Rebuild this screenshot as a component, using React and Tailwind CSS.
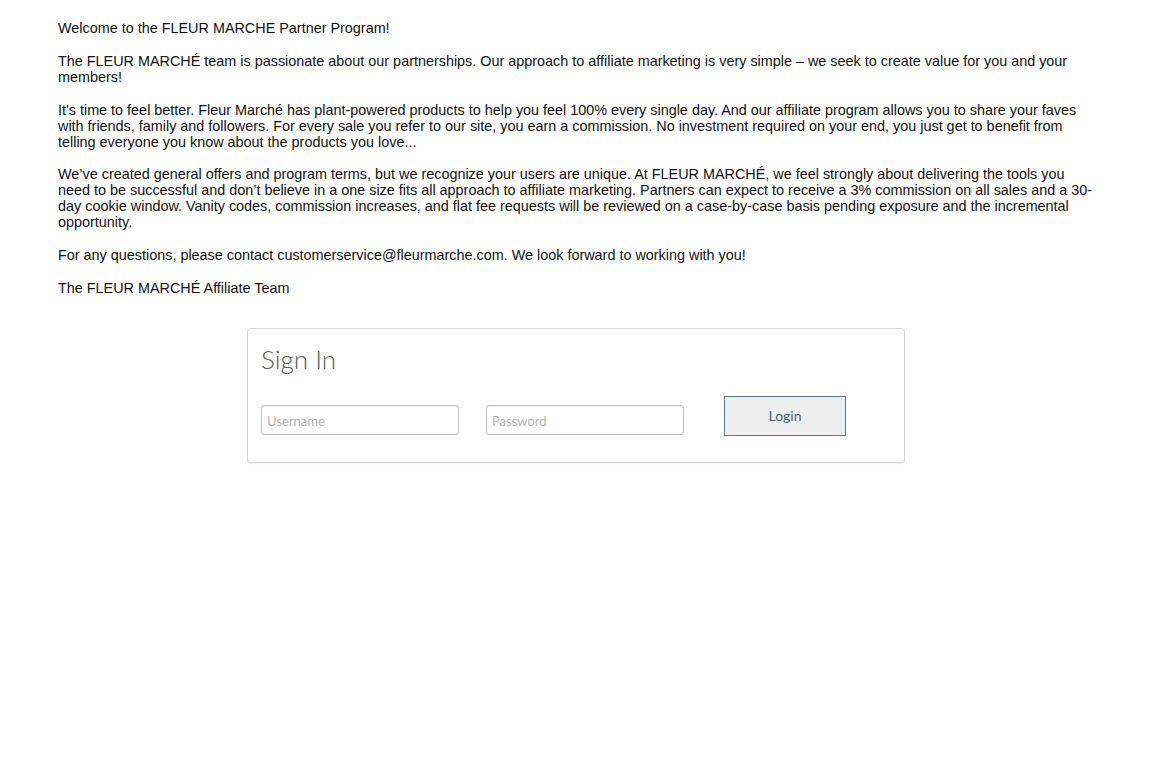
export default function App() {
  const body = { fontFamily: '"Liberation Sans", Arial, sans-serif' };
  const ui = { fontFamily: 'Lato, "Open Sans", sans-serif' };
  return (
    <div className="min-h-[768px] bg-white px-[58px] pt-[20px] text-[#111]" style={body}>
      <div className="text-[14.4px] leading-[16px]">
        <p className="mb-[16.8px]">Welcome to the FLEUR MARCHE Partner Program!</p>
        <p className="mb-[16.8px]">
          The FLEUR MARCHÉ team is passionate about our partnerships. Our approach to affiliate marketing is very simple – we seek to create value for you and your members!
        </p>
        <p className="mb-[16.8px]">
          It's time to feel better. Fleur Marché has plant-powered products to help you feel 100% every single day. And our affiliate program allows you to share your faves with friends, family and followers. For every sale you refer to our site, you earn a commission. No investment required on your end, you just get to benefit from telling everyone you know about the products you love...
        </p>
        <p className="mb-[16.8px]">
          We’ve created general offers and program terms, but we recognize your users are unique. At FLEUR MARCHÉ, we feel strongly about delivering the tools you need to be successful and don’t believe in a one size fits all approach to affiliate marketing. Partners can expect to receive a 3% commission on all sales and a 30-day cookie window. Vanity codes, commission increases, and flat fee requests will be reviewed on a case-by-case basis pending exposure and the incremental opportunity.
        </p>
        <p className="mb-[16.8px]">
          For any questions, please contact customerservice@fleurmarche.com. We look forward to working with you!
        </p>
        <p>The FLEUR MARCHÉ Affiliate Team</p>
      </div>

      <div className="mx-auto mt-[32px] h-[135px] w-[658px] rounded-[3px] border border-[#d6d6d6] pl-[13px] pt-[14px] shadow-[0_1px_2px_rgba(0,0,0,0.06)]" style={ui}>
        <h2 className="text-[26px] leading-[32px] font-light text-[#5a5a5a]">Sign In</h2>
        <div className="mt-[21px] flex items-end">
          <input
            placeholder="Username"
            className="h-[30px] w-[198px] rounded-[3px] border border-[#bdbdbd] px-[5px] pt-[2px] text-[13px] text-[#555] shadow-[inset_0_1px_1px_rgba(0,0,0,0.05)] outline-none placeholder:text-[#b3b3b3]"
          />
          <input
            type="password"
            placeholder="Password"
            className="ml-[27px] h-[30px] w-[198px] rounded-[3px] border border-[#bdbdbd] px-[5px] pt-[2px] text-[13px] text-[#555] shadow-[inset_0_1px_1px_rgba(0,0,0,0.05)] outline-none placeholder:text-[#b3b3b3]"
          />
          <button className="ml-[40px] mb-[-1px] h-[40px] w-[122px] border border-[#5d7b88] bg-[#eeeeee] text-[14px] text-[#3f6577]">
            Login
          </button>
        </div>
      </div>
    </div>
  );
}
